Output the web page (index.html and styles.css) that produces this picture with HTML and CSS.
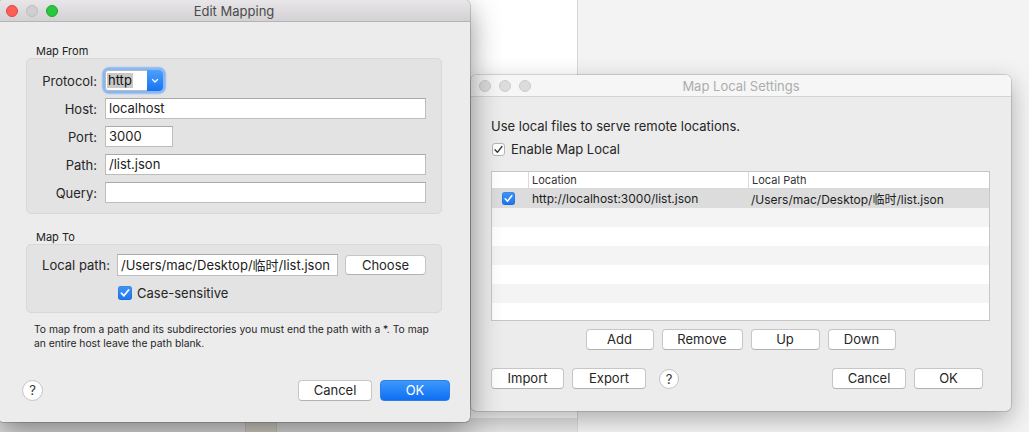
FILE: index.html
```html
<!DOCTYPE html>
<html>
<head>
<meta charset="utf-8">
<title>Edit Mapping</title>
<link rel="stylesheet" href="styles.css">
</head>
<body>
<div class="desktop">
  <div class="bg-left">
    <div class="bg-left-main"></div>
    <div class="bg-left-bottom"><div class="bg-block"></div></div>
  </div>
  <div class="bg-right"></div>
</div>

<div class="window maplocal">
  <div class="titlebar inactive">
    <div class="lights"><span class="light"></span><span class="light"></span><span class="light"></span></div>
    <div class="title">Map Local Settings</div>
  </div>
  <div class="ml-body">
    <div class="ml-text">Use local files to serve remote locations.</div>
    <div class="ml-check"><span class="cb plain"><svg viewBox="0 0 13 13" width="13" height="13"><path d="M3 6.8 L5.4 9.3 L10 3.5" fill="none" stroke="#333" stroke-width="1.3" stroke-linecap="round" stroke-linejoin="round"/></svg></span>Enable Map Local</div>
    <div class="table">
      <div class="thead">
        <div class="c-check"></div>
        <div class="c-loc">Location</div>
        <div class="c-path">Local Path</div>
      </div>
      <div class="trow selected">
        <div class="c-check"><span class="cb blue small"><svg viewBox="0 0 13 13" width="13" height="13"><path d="M3.2 6.8 L5.5 9.2 L9.8 3.8" fill="none" stroke="#fff" stroke-width="1.6" stroke-linecap="round" stroke-linejoin="round"/></svg></span></div>
        <div class="c-loc">http://localhost:3000/list.json</div>
        <div class="c-path">/Users/mac/Desktop/临时/list.json</div>
      </div>
      <div class="trow alt"></div>
      <div class="trow"></div>
      <div class="trow alt"></div>
      <div class="trow"></div>
      <div class="trow alt"></div>
      <div class="trow"></div>
    </div>
    <div class="ml-actions">
      <button class="btn w-add">Add</button>
      <button class="btn w-remove">Remove</button>
      <button class="btn w-up">Up</button>
      <button class="btn w-down">Down</button>
    </div>
    <div class="ml-footer">
      <button class="btn w-import">Import</button>
      <button class="btn w-export">Export</button>
      <button class="help small-help">?</button>
      <div class="spacer"></div>
      <button class="btn w-cancel2">Cancel</button>
      <button class="btn w-ok2">OK</button>
    </div>
  </div>
</div>

<div class="window edit">
  <div class="titlebar active">
    <div class="lights"><span class="light red"></span><span class="light gray"></span><span class="light green"></span></div>
    <div class="title">Edit Mapping</div>
  </div>
  <div class="edit-body">
    <div class="group-label">Map From</div>
    <div class="group from">
      <label>Protocol:</label>
      <div class="popup"><span class="popup-value"><span class="sel">http</span></span><span class="popup-arrow"><svg viewBox="0 0 16 21" width="16" height="21"><path d="M5.5 9.5 L8 12 L10.5 9.5" fill="none" stroke="#fff" stroke-width="1.3" stroke-linecap="round" stroke-linejoin="round"/></svg></span></div>
      <label>Host:</label>
      <div class="field">localhost</div>
      <label>Port:</label>
      <div class="field port">3000</div>
      <label>Path:</label>
      <div class="field">/list.json</div>
      <label>Query:</label>
      <div class="field"></div>
    </div>
    <div class="group-label second">Map To</div>
    <div class="group to">
      <div class="to-row">
        <label>Local path:</label>
        <div class="field local">/Users/mac/Desktop/临时/list.json</div>
        <button class="btn w-choose">Choose</button>
      </div>
      <div class="to-check"><span class="cb blue"><svg viewBox="0 0 14 14" width="14" height="14"><path d="M3.4 7.2 L5.9 9.8 L10.6 4" fill="none" stroke="#fff" stroke-width="1.7" stroke-linecap="round" stroke-linejoin="round"/></svg></span>Case-sensitive</div>
    </div>
    <p class="note">To map from a path and its subdirectories you must end the path with a *. To map<br>an entire host leave the path blank.</p>
    <div class="edit-footer">
      <button class="help">?</button>
      <div class="spacer"></div>
      <button class="btn w-cancel">Cancel</button>
      <button class="btn primary w-ok">OK</button>
    </div>
  </div>
</div>
</body>
</html>
```

FILE: styles.css
```css
* { box-sizing: border-box; }
html, body { margin: 0; padding: 0; }
body {
  width: 1029px;
  height: 432px;
  overflow: hidden;
  position: relative;
  font-family: Inter, "Noto Sans CJK SC", sans-serif;
  font-size: 13px;
  color: #262626;
  background: #f3f3f3;
}

/* background application */
.desktop { display: flex; height: 432px; }
.bg-left {
  width: 578px;
  background: #ffffff;
  border-right: 1px solid #d8d8d8;
  display: flex;
  flex-direction: column;
}
.bg-left-main { flex: 1; }
.bg-left-bottom { height: 14px; display: flex; background: #e6e6e6; }
.bg-block { margin-left: 245px; width: 32px; background: #dcd8d0; border-left: 1px solid #cfcbc4; border-right: 1px solid #cfcbc4; }
.bg-right { flex: 1; background: #f3f3f3; }

/* windows */
.window {
  position: absolute;
  background: #ececec;
  border-radius: 5px;
  display: flex;
  flex-direction: column;
}
.window.edit {
  left: -2px;
  top: 0;
  width: 472px;
  height: 422px;
  z-index: 2;
  box-shadow: 0 0 0 0.5px rgba(0,0,0,0.35), 0 10px 30px rgba(0,0,0,0.45);
}
.window.maplocal {
  left: 471px;
  top: 75px;
  width: 540px;
  height: 336px;
  z-index: 1;
  box-shadow: 0 0 0 0.5px rgba(0,0,0,0.25), 0 8px 24px rgba(0,0,0,0.3);
}

.titlebar {
  height: 22px;
  flex: none;
  display: flex;
  align-items: center;
  position: relative;
  border-radius: 5px 5px 0 0;
}
.titlebar.active {
  background: linear-gradient(#e8e6e8, #d3d1d3);
  border-bottom: 1px solid #b4b4b4;
}
.titlebar.inactive {
  background: #f6f6f6;
  border-bottom: 1px solid #d4d4d4;
}
.lights { display: flex; gap: 8px; padding-left: 8px; width: 60px; flex: none; }
.light {
  width: 12px; height: 12px; border-radius: 50%;
  background: #dcdcdc; border: 0.5px solid #cbcbcb;
}
.light.red { background: #fd5e57; border-color: #e0443e; }
.light.gray { background: #cfcfcf; border-color: #bdbdbd; }
.light.green { background: #29c840; border-color: #1aab29; }
.title {
  flex: 1;
  text-align: center;
  margin-right: 60px;
  font-size: 13px;
  color: #4b4b4b;
}
.inactive .title { color: #adadad; }

/* edit mapping body */
.edit-body {
  flex: 1;
  display: flex;
  flex-direction: column;
  padding: 22px 28px 21px;
}
.group-label {
  font-size: 11px;
  line-height: 14px;
  padding-left: 10px;
  color: #222;
}
.group-label.second { margin-top: 16px; }
.group {
  background: #e3e3e3;
  border: 1px solid #d8d8d8;
  border-radius: 5px;
}
.group.from {
  display: grid;
  grid-template-columns: 70px 1fr;
  column-gap: 8px;
  row-gap: 7px;
  align-items: center;
  padding: 11px 15px 10px 0;
}
.group label {
  text-align: right;
  font-size: 13px;
  color: #262626;
}
.field {
  height: 21px;
  background: #fff;
  border: 1px solid #bdbdbd;
  border-top-color: #a9a9a9;
  padding-left: 3px;
  font-size: 13px;
  line-height: 19px;
  white-space: nowrap;
  overflow: hidden;
  color: #1c1c1c;
}
.field.port { width: 68px; }

.popup {
  width: 58px;
  height: 21px;
  display: flex;
  border-radius: 4px;
  box-shadow: 0 0 0 2.5px #8ab6f2, 0 0 0 3.5px #b9d2f4;
  background: #fff;
}
.popup-value {
  flex: 1;
  padding: 2px 1px;
  border: 1px solid #b9b9b9;
  border-right: none;
  border-radius: 3px 0 0 3px;
  display: flex;
}
.sel {
  background: #c9c9c9;
  padding: 0 1px;
  line-height: 15px;
  font-size: 13px;
  color: #111;
}
.popup-arrow {
  width: 16px;
  background: linear-gradient(#4da0fb, #1574f2);
  border-radius: 0 4px 4px 0;
  display: flex;
}

.group.to { padding: 9px 15px 12px 15px; }
.to-row { display: flex; align-items: center; gap: 7px; }
.to-row label { width: 68px; }
.field.local { width: 221px; height: 22px; line-height: 20px; }
.to-check {
  display: flex;
  align-items: center;
  gap: 5px;
  margin-top: 10px;
  padding-left: 76px;
  font-size: 13px;
  line-height: 14px;
}

.cb {
  width: 14px; height: 14px;
  border-radius: 3px;
  display: flex;
  flex: none;
}
.cb.blue { background: linear-gradient(#3f95f9, #1b74ef); box-shadow: inset 0 0 0 0.5px rgba(0,0,0,0.15); }
.cb.small { width: 13px; height: 13px; }
.cb.plain {
  width: 13px; height: 13px;
  background: #fff;
  border: 1px solid #b6b6b6;
}
.cb.plain svg { margin: -1px; }

.note {
  margin: 9px 0 0;
  padding-left: 8px;
  font-size: 10.3px;
  line-height: 14px;
  color: #262626;
  white-space: nowrap;
}
.edit-footer {
  margin: auto -8px 0 -4px;
  display: flex;
  align-items: center;
  gap: 8px;
}
.spacer { flex: 1; }

.btn {
  height: 21px;
  padding: 0;
  background: #fff;
  border: 1px solid #c6c6c6;
  border-bottom-color: #b2b2b2;
  border-radius: 4px;
  font-family: inherit;
  font-size: 13px;
  color: #262626;
  line-height: 19px;
}
.btn.primary {
  background: linear-gradient(#3c98fc, #0f6ff2);
  border-color: #2a7fe8;
  color: #fff;
}
.help {
  width: 21px; height: 21px;
  border-radius: 50%;
  background: #fff;
  border: 1px solid #c4c4c4;
  padding: 0;
  font-family: inherit;
  font-size: 13px;
  color: #333;
  line-height: 19px;
}
.w-cancel { width: 74px; }
.w-ok { width: 70px; }
.w-choose { width: 81px; height: 20px; line-height: 18px; }

/* map local body */
.ml-body {
  flex: 1;
  display: flex;
  flex-direction: column;
  padding: 21px 21px 22px 20px;
}
.ml-text { line-height: 16px; font-size: 13px; }
.ml-check {
  margin-top: 7px;
  line-height: 16px;
  display: flex;
  align-items: center;
  gap: 6px;
  padding-left: 1px;
}
.table {
  margin-top: 14px;
  height: 150px;
  overflow: hidden;
  border: 1px solid #c6c6c6;
  background: #fff;
}
.thead {
  height: 17px;
  display: flex;
  border-bottom: 1px solid #d9d9d9;
  font-size: 11px;
  line-height: 16px;
  color: #333;
}
.thead .c-loc, .thead .c-path { border-left: 1px solid #dadada; }
.c-check { width: 36px; flex: none; display: flex; align-items: center; padding-left: 10px; }
.c-loc { width: 220px; flex: none; padding-left: 3px; white-space: nowrap; }
.c-path { flex: 1; padding-left: 3px; white-space: nowrap; }
.trow {
  height: 19px;
  display: flex;
  align-items: center;
  font-size: 12px;
  color: #1c1c1c;
}
.trow.selected { background: #dcdcdc; }
.trow.alt { background: #f4f4f4; }
.trow .c-loc { padding-left: 4px; }

.ml-actions {
  margin-top: 8px;
  display: flex;
  justify-content: center;
  gap: 8px;
}
.w-add { width: 68px; }
.w-remove { width: 81px; }
.w-up { width: 69px; }
.w-down { width: 68px; }
.ml-footer {
  margin-top: auto;
  display: flex;
  align-items: center;
  gap: 8px;
  padding-right: 7px;
}
.w-import { width: 73px; }
.w-export { width: 74px; }
.small-help { width: 20px; height: 20px; line-height: 18px; margin-left: 5px; }
.w-cancel2 { width: 74px; }
.w-ok2 { width: 69px; }
```
